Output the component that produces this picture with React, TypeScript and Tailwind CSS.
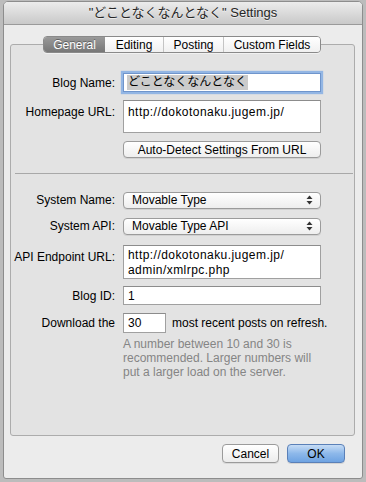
import React from 'react';

const font = "font-['Liberation_Sans','Noto_Sans_CJK_JP',sans-serif]";

const SelectArrows: React.FC = () => (
  <svg width="7" height="10" viewBox="0 0 7 10" className="shrink-0">
    <path d="M3.5 0.5 L6.5 4 L0.5 4 Z" fill="#333" />
    <path d="M3.5 9.5 L6.5 6 L0.5 6 Z" fill="#333" />
  </svg>
);

const Label: React.FC<{ children: React.ReactNode; className?: string }> = ({ children, className = '' }) => (
  <div className={`w-[104px] shrink-0 text-right text-[12px] text-black ${className}`}>{children}</div>
);

const Select: React.FC<{ value: string }> = ({ value }) => (
  <div className="flex h-[17px] w-[198px] items-center justify-between rounded-[4px] border border-[#9b9b9b] bg-gradient-to-b from-white to-[#eeeeee] pl-[8px] pr-[7px] text-[12px] shadow-[0_1px_0_rgba(0,0,0,0.08)]">
    <span>{value}</span>
    <SelectArrows />
  </div>
);

const tabs = [
  { name: 'General', w: 'w-[61px]', active: true },
  { name: 'Editing', w: 'w-[58px]' },
  { name: 'Posting', w: 'w-[60px]' },
  { name: 'Custom Fields', w: 'w-[97px]' },
];

const App: React.FC = () => {
  return (
    <div className={`h-[482px] w-[366px] overflow-hidden bg-[#bcbcbc] pl-[3px] pt-[1px] ${font}`}>
      <div className="flex h-[478px] w-[360px] flex-col overflow-hidden rounded-t-[5px] rounded-b-[3px] border border-[#8d8d8d] bg-[#ececec]">
        {/* title bar */}
        <div className="flex h-[23px] shrink-0 items-center justify-center border-b border-[#9a9a9a] bg-gradient-to-b from-[#ececec] to-[#c9c9c9] text-[13px] text-[#262626] [text-shadow:0_1px_0_rgba(255,255,255,0.6)]">
          "どことなくなんとなく" Settings
        </div>

        {/* tab box */}
        <div className="relative mt-[19px] ml-[6px] h-[392px] w-[345px] rounded-[3px] border border-[#acacac] bg-[#e3e3e3]">
          <div className="absolute -top-[9px] left-[32px] flex h-[17px] overflow-hidden rounded-[4px] border border-[#8a8a8a] text-[12px] shadow-[0_1px_0_rgba(255,255,255,0.5)]">
            {tabs.map((t, i) => (
              <div
                key={t.name}
                className={`flex items-center justify-center ${t.w} ${
                  t.active
                    ? 'bg-gradient-to-b from-[#9a9a9a] to-[#777777] text-white [text-shadow:0_-1px_0_rgba(0,0,0,0.35)]'
                    : 'bg-gradient-to-b from-white to-[#f0f0f0] text-black'
                } ${i > 1 ? 'border-l border-[#c4c4c4]' : ''}`}
              >
                {t.name}
              </div>
            ))}
          </div>

          <div className="flex flex-col pt-[28px]">
            <div className="flex items-center gap-[8px]">
              <Label>Blog Name:</Label>
              <div className="flex h-[19px] w-[198px] items-center border border-[#6f95cc] bg-white pl-[3px] text-[12px] shadow-[0_0_1px_2px_#93b6e4]">
                <span className="bg-[#cbcbcb] px-[1px] leading-[15px]">どことなくなんとなく</span>
              </div>
            </div>

            <div className="mt-[8px] flex items-start gap-[8px]">
              <Label className="pt-[3px]">Homepage URL:</Label>
              <div className="h-[33px] w-[198px] border border-[#a0a0a0] border-t-[#8c8c8c] bg-white pl-[4px] pt-[2px] text-[12px] tracking-[0.45px]">
                http://dokotonaku.jugem.jp/
              </div>
            </div>

            <div className="mt-[8px] flex gap-[8px]">
              <div className="w-[104px]" />
              <div className="flex h-[17px] w-[198px] items-center justify-center rounded-[4px] border border-[#9b9b9b] bg-gradient-to-b from-white to-[#eeeeee] text-[12px] shadow-[0_1px_0_rgba(0,0,0,0.08)]">
                Auto-Detect Settings From URL
              </div>
            </div>

            <div className="mt-[15px] ml-[4px] mr-[1px] border-t border-[#a8a8a8]" />

            <div className="mt-[17px] flex items-center gap-[8px]">
              <Label>System Name:</Label>
              <Select value="Movable Type" />
            </div>

            <div className="mt-[8px] flex items-center gap-[8px]">
              <Label>System API:</Label>
              <Select value="Movable Type API" />
            </div>

            <div className="mt-[10px] flex items-start gap-[8px]">
              <Label className="pt-[3px]">API Endpoint URL:</Label>
              <div className="h-[34px] w-[198px] border border-[#a0a0a0] border-t-[#8c8c8c] bg-white pl-[4px] pt-[2px] text-[12px] leading-[15px] tracking-[0.45px]">
                http://dokotonaku.jugem.jp/
                <br />
                admin/xmlrpc.php
              </div>
            </div>

            <div className="mt-[7px] flex items-center gap-[8px]">
              <Label>Blog ID:</Label>
              <div className="flex h-[19px] w-[198px] items-center border border-[#a0a0a0] border-t-[#8c8c8c] bg-white pl-[4px] text-[12px]">
                1
              </div>
            </div>

            <div className="mt-[8px] flex items-center gap-[8px]">
              <Label>Download the</Label>
              <div className="flex h-[20px] w-[43px] items-center border border-[#a0a0a0] border-t-[#8c8c8c] bg-white pl-[4px] text-[12px]">
                30
              </div>
              <span className="-ml-[2px] text-[12px]">most recent posts on refresh.</span>
            </div>

            <div className="mt-[4px] ml-[112px] w-[200px] text-[12px] leading-[14px] text-[#858585]">
              A number between 10 and 30 is recommended. Larger numbers will put a larger load on the server.
            </div>
          </div>
        </div>

        {/* bottom buttons */}
        <div className="mt-[8px] flex justify-end gap-[8px] pr-[17px]">
          <div className="flex h-[19px] w-[57px] items-center justify-center rounded-[4px] border border-[#9b9b9b] bg-gradient-to-b from-white to-[#ececec] text-[12px] shadow-[0_1px_0_rgba(0,0,0,0.08)]">
            Cancel
          </div>
          <div className="flex h-[19px] w-[58px] items-center justify-center rounded-[4px] border border-[#5a80b8] bg-gradient-to-b from-[#c6dcf5] via-[#8db8ea] to-[#6ea3e2] text-[12px] shadow-[0_1px_0_rgba(0,0,0,0.1)]">
            OK
          </div>
        </div>
      </div>
    </div>
  );
};

export default App;
